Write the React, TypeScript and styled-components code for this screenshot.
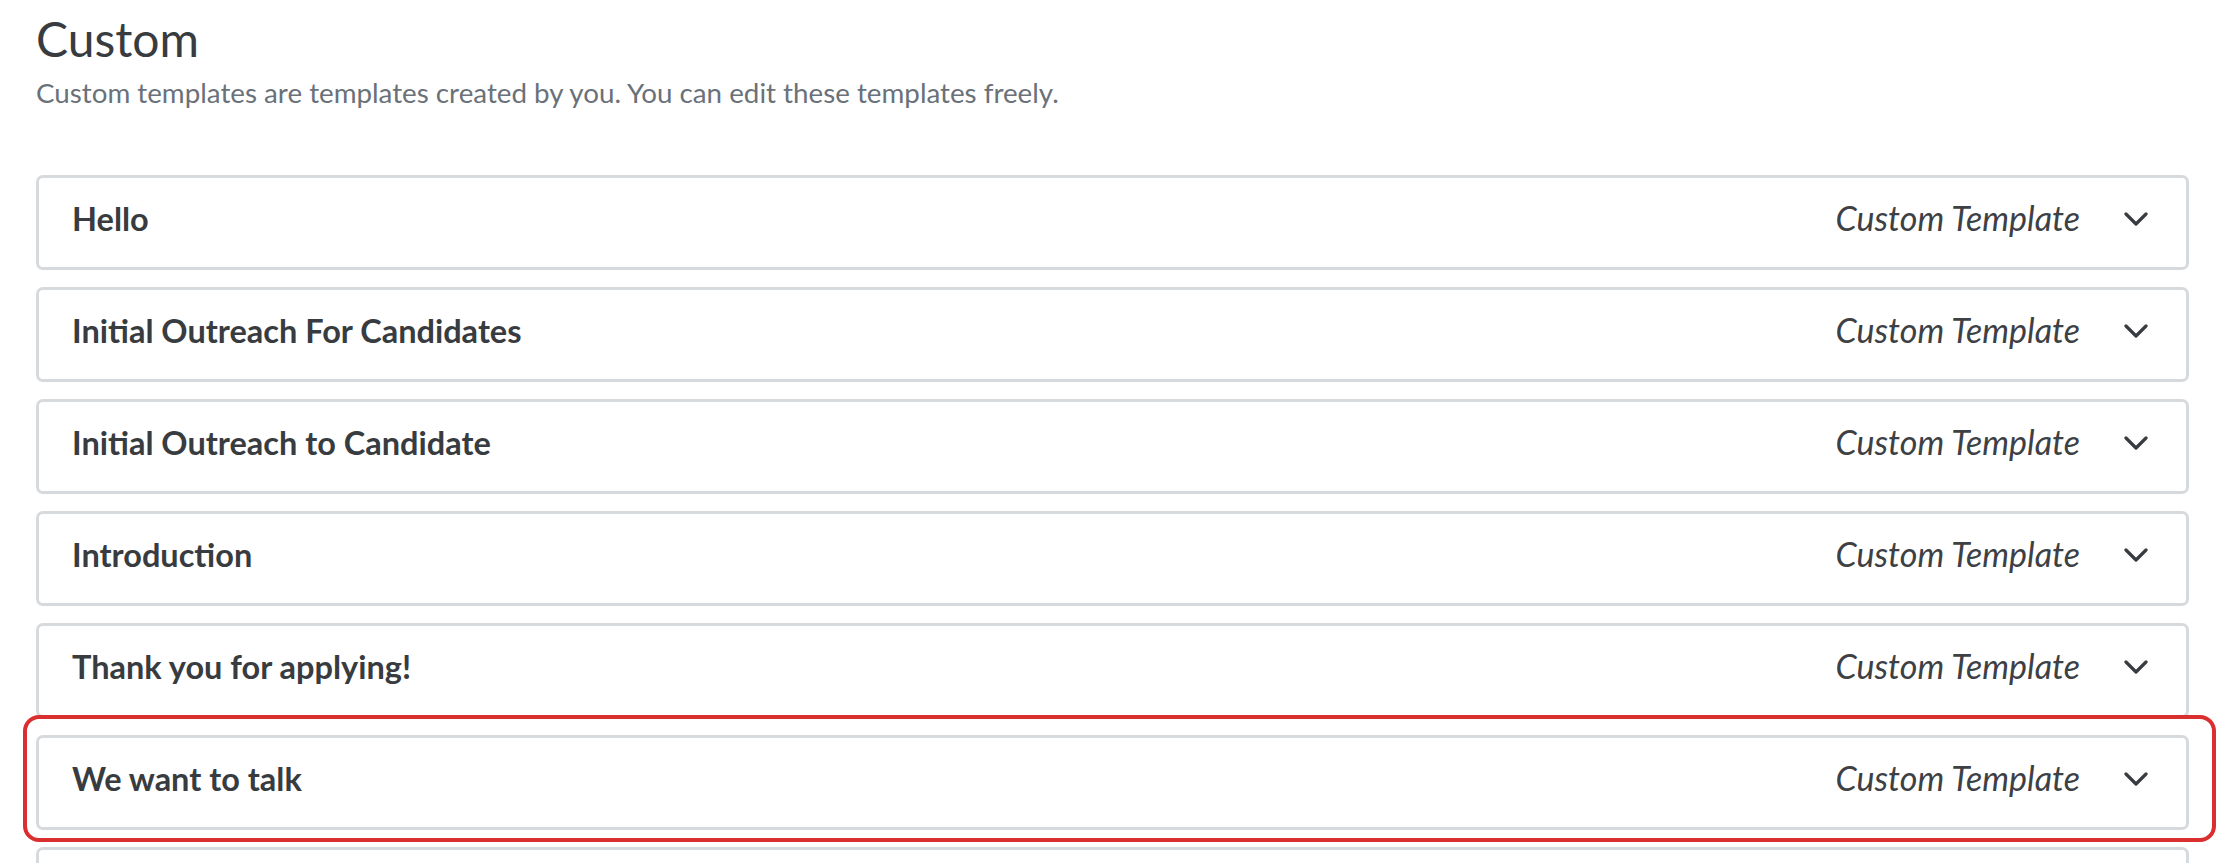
import React from 'react';
import styled, { createGlobalStyle, css } from 'styled-components';

const GlobalStyle = createGlobalStyle`
  html, body {
    margin: 0;
    padding: 0;
    background: #ffffff;
  }
  body {
    font-family: Lato, 'Open Sans', sans-serif;
    color: #383c40;
    -webkit-font-smoothing: antialiased;
  }
`;

const Page = styled.div`
  padding: 10px 49px 0 36px;
`;

const Title = styled.h1`
  margin: 0;
  font-size: 48px;
  font-weight: 400;
  line-height: 1.2;
  color: #383c40;
`;

const Subtitle = styled.p`
  margin: 8px 0 0;
  font-size: 27.75px;
  font-weight: 400;
  line-height: 1.2;
  color: #6a7179;
`;

const List = styled.div`
  display: flex;
  flex-direction: column;
  gap: 17px;
  margin-top: 66px;
`;

const Row = styled.div<{ $highlighted?: boolean }>`
  display: flex;
  align-items: center;
  height: 95px;
  box-sizing: border-box;
  padding: 0 38px 7px 33px;
  border: 3px solid #d7dadd;
  border-radius: 7px;
  background: #ffffff;

  ${({ $highlighted }) =>
    $highlighted &&
    css`
      position: relative;
      &::after {
        content: '';
        position: absolute;
        top: -23px;
        left: -16px;
        right: -30px;
        bottom: -15px;
        border: 4px solid #da2f2f;
        border-radius: 16px;
        pointer-events: none;
      }
    `}
`;

const Name = styled.span`
  flex: 1;
  font-size: 32.5px;
  font-weight: 700;
  line-height: 1.2;
  color: #383c40;
`;

const Kind = styled.span`
  font-size: 34px;
  font-style: italic;
  font-weight: 400;
  line-height: 1.2;
  color: #3d4145;
`;

const Toggle = styled.svg`
  margin-left: 44px;
  flex-shrink: 0;
`;

const Chevron = () => (
  <Toggle width="24" height="14" viewBox="0 0 24 14" fill="none">
    <polyline
      points="2,2 12,12 22,2"
      stroke="#383c40"
      strokeWidth="3.2"
      strokeLinecap="round"
      strokeLinejoin="round"
    />
  </Toggle>
);

const templates = [
  'Hello',
  'Initial Outreach For Candidates',
  'Initial Outreach to Candidate',
  'Introduction',
  'Thank you for applying!',
  'We want to talk',
];

const App = () => (
  <>
    <GlobalStyle />
    <Page>
      <Title>Custom</Title>
      <Subtitle>Custom templates are templates created by you. You can edit these templates freely.</Subtitle>
      <List>
        {templates.map((name) => (
          <Row key={name} $highlighted={name === 'We want to talk'}>
            <Name>{name}</Name>
            <Kind>Custom Template</Kind>
            <Chevron />
          </Row>
        ))}
        <Row />
      </List>
    </Page>
  </>
);

export default App;
